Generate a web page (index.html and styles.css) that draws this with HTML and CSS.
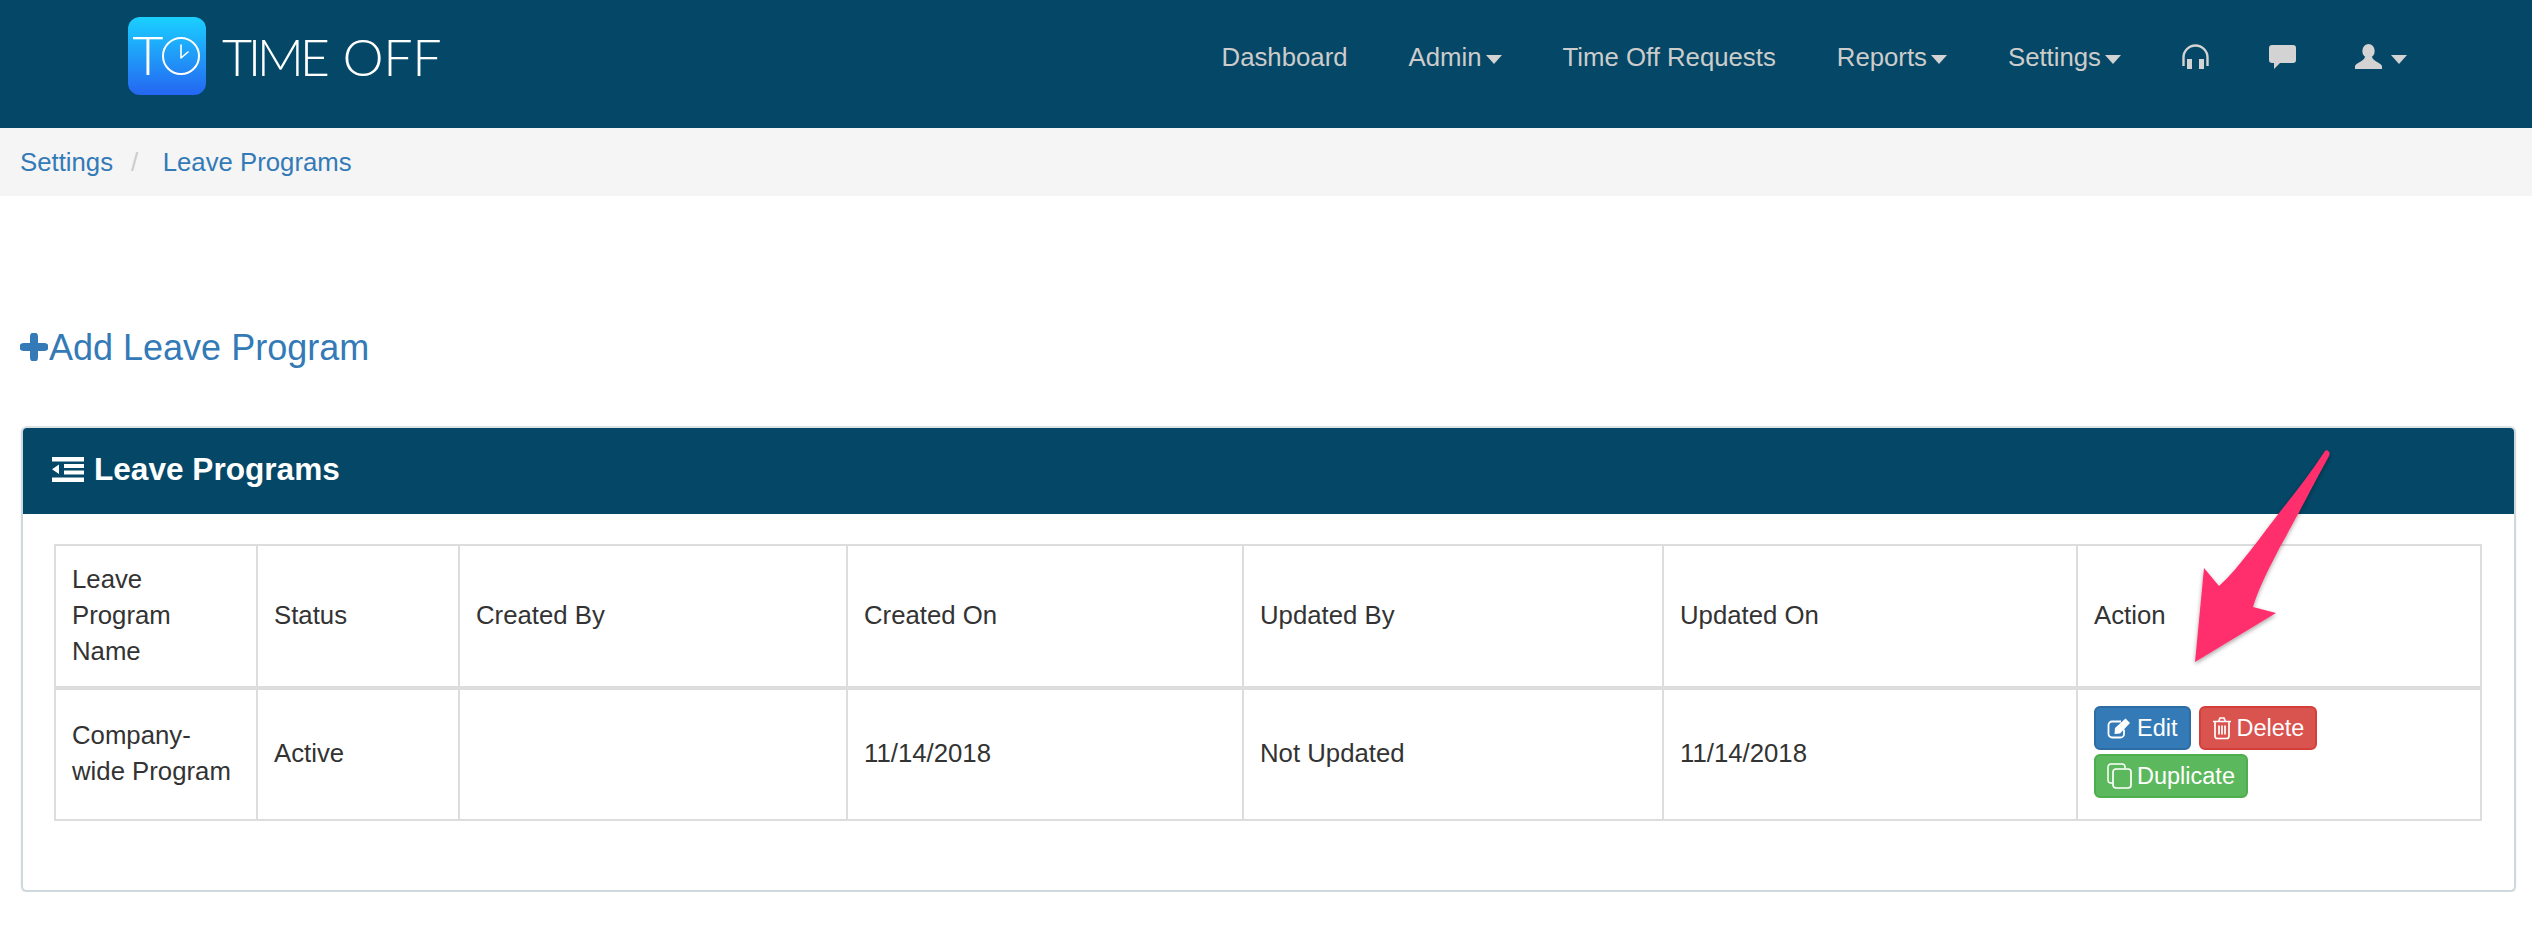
FILE: index.html
```html
<!DOCTYPE html>
<html lang="en">
<head>
<meta charset="utf-8">
<title>Leave Programs</title>
<link rel="stylesheet" href="styles.css">
</head>
<body>
<header class="navbar">
  <a class="brand" href="#">
    <svg class="brand-icon" viewBox="0 0 78 78" aria-hidden="true">
      <defs>
        <linearGradient id="tile" x1="0" y1="0" x2="0" y2="1">
          <stop offset="0" stop-color="#1ad0ff"/>
          <stop offset="1" stop-color="#2566f2"/>
        </linearGradient>
      </defs>
      <rect width="78" height="78" rx="12" fill="url(#tile)"/>
      <text x="20" y="58" class="brand-t" text-anchor="middle">T</text>
      <circle cx="53" cy="39" r="18" fill="none" stroke="#fff" stroke-width="2"/>
      <path d="M53 39V26M53 39L60 33" fill="none" stroke="#fff" stroke-width="1.6" stroke-linecap="round" transform="translate(0 2)"/>
    </svg>
    <span class="brand-name"><span class="brand-time">TIME</span> <span class="brand-off">OFF</span></span>
  </a>
  <nav class="nav">
    <a href="#">Dashboard</a>
    <a href="#">Admin<i class="caret"></i></a>
    <a href="#">Time Off Requests</a>
    <a href="#">Reports<i class="caret"></i></a>
    <a href="#">Settings<i class="caret"></i></a>
    <a href="#" class="nav-icon" aria-label="Support">
      <svg viewBox="0 0 27 25" width="27" height="25"><path d="M1.500 22V13.500a12 12 0 0 1 24 0V22" fill="none" stroke="#d3d3d3" stroke-width="2.400"/><rect x="5" y="15" width="5" height="10" fill="#d3d3d3"/><rect x="17" y="15" width="5" height="10" fill="#d3d3d3"/></svg>
    </a>
    <a href="#" class="nav-icon" aria-label="Messages">
      <svg viewBox="0 0 27 24" width="27" height="24"><path d="M3 0H24a3 3 0 0 1 3 3V15a3 3 0 0 1-3 3H11L5 24V18H3a3 3 0 0 1-3-3V3a3 3 0 0 1 3-3Z" fill="#d3d3d3"/></svg>
    </a>
    <a href="#" class="nav-icon" aria-label="Account">
      <svg viewBox="0 0 27 25" width="27" height="25"><ellipse cx="13.500" cy="7" rx="6.200" ry="7" fill="#d3d3d3"/><path d="M0 25V22.500C0 19 8.500 18 10 13H17C18.500 18 27 19 27 22.500V25Z" fill="#d3d3d3"/></svg>
      <i class="caret caret-user"></i>
    </a>
  </nav>
</header>

<div class="breadcrumb">
  <a href="#">Settings</a>
  <span class="sep">/</span>
  <a href="#">Leave Programs</a>
</div>

<main class="content">
  <a class="add-link" href="#">
    <svg class="plus" viewBox="0 0 28 28" aria-hidden="true"><path d="M14 3.500V24.500M3.500 14H24.500" stroke="#337ab7" stroke-width="8" stroke-linecap="round" fill="none"/></svg><span>Add Leave Program</span>
  </a>

  <section class="panel">
    <h2 class="panel-heading">
      <svg class="outdent" viewBox="0 0 32 25" aria-hidden="true"><path d="M0 0H32V4.500H0ZM12 7H32V11H12ZM12 13.500H32V17.500H12ZM0 20.500H32V25H0ZM7 7.500V17L0 12.200Z" fill="#fff"/></svg>
      Leave Programs
    </h2>
    <div class="panel-body">
      <table class="table">
        <colgroup>
          <col class="c1"><col class="c2"><col class="c3"><col class="c4"><col class="c5"><col class="c6"><col class="c7">
        </colgroup>
        <thead>
          <tr>
            <th>Leave Program Name</th>
            <th>Status</th>
            <th>Created By</th>
            <th>Created On</th>
            <th>Updated By</th>
            <th>Updated On</th>
            <th>Action</th>
          </tr>
        </thead>
        <tbody>
          <tr>
            <td>Company-wide Program</td>
            <td>Active</td>
            <td></td>
            <td>11/14/2018</td>
            <td>Not Updated</td>
            <td>11/14/2018</td>
            <td class="action-cell">
              <div class="actions">
                <a class="btn btn-blue" href="#">
                  <svg viewBox="0 0 25 22" width="25" height="22" aria-hidden="true"><path d="M17 12.500V17a3.500 3.500 0 0 1-3.500 3.500H5A3.500 3.500 0 0 1 1.500 17V8A3.500 3.500 0 0 1 5 4.500H14" fill="none" stroke="#fff" stroke-width="1.800"/><path d="M8 11L18.500 1.500L23 6L13 16.500L7.500 17Z" fill="#fff"/></svg>
                  Edit
                </a>
                <a class="btn btn-red" href="#">
                  <svg viewBox="0 0 20 24" width="20" height="24" aria-hidden="true"><path d="M1 5.500H19M6.500 5.500L8 2H12L13.500 5.500M3 5.500V20a2.500 2.500 0 0 0 2.500 2.500H14.500A2.500 2.500 0 0 0 17 20V5.500M7 9.500V18.500M10 9.500V18.500M13 9.500V18.500" fill="none" stroke="#fff" stroke-width="1.700"/></svg>
                  Delete
                </a>
                <a class="btn btn-green" href="#">
                  <svg viewBox="0 0 25 26" width="25" height="26" aria-hidden="true"><path d="M5.500 20H4A3 3 0 0 1 1 17V4A3 3 0 0 1 4 1H15A3 3 0 0 1 18 4V5.500" fill="none" stroke="#fff" stroke-width="1.500"/><rect x="6" y="6" width="18" height="19" rx="3" fill="none" stroke="#fff" stroke-width="1.700"/></svg>
                  Duplicate
                </a>
              </div>
            </td>
          </tr>
        </tbody>
      </table>
    </div>
  </section>
</main>

<svg class="arrow" viewBox="0 0 180 240" aria-hidden="true">
  <defs>
    <filter id="arrow-shadow" x="-20%" y="-20%" width="140%" height="140%">
      <feDropShadow dx="0" dy="2" stdDeviation="2" flood-color="#000" flood-opacity="0.35"/>
    </filter>
  </defs>
  <path filter="url(#arrow-shadow)" fill="#ff2f6d" d="M145 12C147 10 151 13 149 17C135 42 117 78 100 108C92 124 80 145 73 168L96 174L15 223L24 129L39 147C60 128 80 98 103 69C118 50 132 32 145 12Z"/>
</svg>
</body>
</html>
```

FILE: styles.css
```css
* { box-sizing: border-box; }

body {
  margin: 0;
  font-family: "Liberation Sans", Arial, sans-serif;
  font-size: 25.76px;
  line-height: 36px;
  color: #333;
  background: #fff;
  position: relative;
}

a { color: #337ab7; text-decoration: none; }

.navbar {
  height: 128px;
  background: #044766;
  display: flex;
  align-items: center;
  justify-content: space-between;
  padding: 0 125px 0 128px;
}

.brand { display: flex; align-items: center; gap: 16px; margin-top: -16px; }
.brand-icon { width: 78px; height: 78px; display: block; }
.brand-t { font-family: Lato, sans-serif; font-weight: 300; font-size: 54px; fill: #fff; }
.brand-name {
  display: flex;
  gap: 17px;
  font-family: Lato, sans-serif;
  font-weight: 300;
  font-size: 52px;
  line-height: 60px;
  color: #fff;
  white-space: nowrap;
}
.brand-time { letter-spacing: -4.4px; }
.brand-off { letter-spacing: -0.4px; }

.nav { display: flex; align-items: center; gap: 61px; margin-top: -15px; }
.nav a { color: #ccc; display: flex; align-items: center; white-space: nowrap; }
.nav-icon svg { display: block; }
.nav .nav-icon + .nav-icon { margin-left: -1.5px; }

.caret {
  display: block;
  width: 0;
  height: 0;
  margin: 5px 0 0 4px;
  border-top: 9px solid #d3d3d3;
  border-left: 8px solid transparent;
  border-right: 8px solid transparent;
}
.caret-user { margin: 5px 0 0 9px; }

.breadcrumb {
  height: 68px;
  background: #f5f5f5;
  display: flex;
  align-items: center;
  padding-left: 20px;
}
.sep { color: #ccc; margin: 0 24.5px 0 18px; }

.content { padding: 126px 16px 0 21px; }

.add-link {
  display: flex;
  align-items: center;
  font-size: 36px;
  line-height: 52px;
  margin-left: -1px;
}
.plus { width: 28px; height: 28px; display: block; margin-top: -3px; margin-right: 1px; }

.panel {
  margin-top: 52px;
  border: 2px solid #cdd9dc;
  border-top-color: #dde3e5;
  border-radius: 6px;
  box-shadow: 0 1px 2px rgba(0, 0, 0, 0.1);
  background: #fff;
}

.panel-heading {
  margin: 0;
  height: 86px;
  background: #044766;
  color: #fff;
  font-size: 31.6px;
  font-weight: 700;
  display: flex;
  align-items: center;
  gap: 10px;
  padding: 0 0 4px 29px;
  border-radius: 4px 4px 0 0;
}
.outdent { width: 32px; height: 25px; display: block; }

.panel-body { padding: 30px 32px 69px 31px; }

.table {
  width: 100%;
  table-layout: fixed;
  border-collapse: collapse;
}
.c1, .c2 { width: 202px; }
.c3 { width: 388px; }
.c4 { width: 396px; }
.c5 { width: 420px; }
.c6 { width: 414px; }
.c7 { width: auto; }

.table th, .table td {
  border: 2px solid #ddd;
  font-weight: 400;
  text-align: left;
  vertical-align: middle;
}
.table th { padding: 15px 16px 17px; border-bottom-width: 4px; }
.table td { padding: 14px 16px 17px; }
.table .action-cell { padding: 16px; }

.actions { display: flex; flex-wrap: wrap; gap: 4px 8px; margin-bottom: 5px; }

.btn {
  display: flex;
  align-items: center;
  gap: 5px;
  height: 44px;
  padding: 0 11px;
  border: 2px solid;
  border-radius: 6px;
  color: #fff;
  font-size: 23.5px;
}
.btn-blue { background: #337ab7; border-color: #2e6da4; }
.btn-red { background: #d9534f; border-color: #d43f3a; }
.btn-green { background: #5cb85c; border-color: #4cae4c; }

.arrow {
  position: absolute;
  left: 2180px;
  top: 439px;
  width: 180px;
  height: 240px;
}
```
